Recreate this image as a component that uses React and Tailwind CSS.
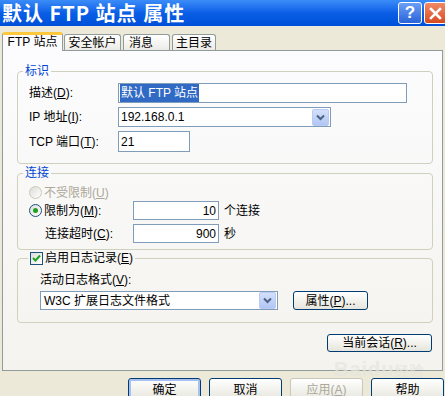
import React from "react";

const FONT = { fontFamily: '"Liberation Sans","Noto Sans CJK SC",sans-serif' };

function Chevron() {
  return (
    <div className="ml-auto mr-[1px] flex h-[17px] w-[17px] items-center justify-center rounded-[2px] border border-[#b9cbf2] bg-gradient-to-b from-[#d3e0fb] to-[#b2c6f4]">
      <svg width="9" height="7" viewBox="0 0 9 7">
        <path d="M1 1.5 L4.5 5 L8 1.5" fill="none" stroke="#4d6185" strokeWidth="2" />
      </svg>
    </div>
  );
}

function Radio({ checked, disabled }) {
  return (
    <div
      className={
        "flex h-[13px] w-[13px] items-center justify-center rounded-full border bg-gradient-to-br from-[#dcdcd7] to-white " +
        (disabled ? "border-[#cac8bb]" : "border-[#1c5180]")
      }
    >
      {checked && <div className="h-[5px] w-[5px] rounded-full bg-[#21a121]" />}
    </div>
  );
}

function Btn({ children, w, isDefault, disabled, h = "h-[19px]" }) {
  return (
    <div
      className={
        "flex items-center justify-center rounded-[3px] border bg-gradient-to-b from-white to-[#e6e5dc] text-[12px] " +
        h +
        " " +
        w +
        " " +
        (disabled ? "border-[#c9c7ba] text-[#aca899]" : "border-[#003c74] text-black") +
        (isDefault ? " shadow-[inset_0_0_0_2px_#a8c1f0]" : "")
      }
    >
      {children}
    </div>
  );
}

function U({ children }) {
  return <span className="underline underline-offset-[1px]">{children}</span>;
}

export default function App() {
  return (
    <div className="relative flex h-[396px] w-[445px] flex-col overflow-hidden bg-[#ece9d8] text-[12px] text-black" style={FONT}>
      {/* Title bar */}
      <div className="flex h-[26px] shrink-0 items-center bg-gradient-to-b from-[#3b8cf8] via-[#0a5ee6] to-[#0050d8] pl-[2px]">
        <div className="text-[20px] font-bold leading-[24px] tracking-[1px] text-white" style={{ fontFamily: '"Noto Sans CJK SC",sans-serif' }}>
          默认 FTP 站点 属性
        </div>
        <div className="ml-auto flex items-center gap-[2px]">
          <div className="flex h-[22px] w-[24px] items-center justify-center rounded-[3px] border border-white bg-gradient-to-b from-[#6b9ef5] to-[#2a63d9] text-[17px] font-bold text-white">
            ?
          </div>
          <div className="-mr-[2px] flex h-[22px] w-[23px] items-center justify-center rounded-[3px] border border-white bg-gradient-to-b from-[#f08a64] to-[#d8481d]">
            <svg width="13" height="13" viewBox="0 0 13 13">
              <path d="M2 2 L11 11 M11 2 L2 11" stroke="white" strokeWidth="2.6" strokeLinecap="square" />
            </svg>
          </div>
        </div>
      </div>

      {/* Tabs + panel */}
      <div className="pl-[2px] pt-[6px]">
        <div className="flex h-[18px] items-end">
          <div className="relative z-10 -mb-px flex h-[19px] w-[61px] items-center justify-center rounded-t-[3px] border-x border-t-[3px] border-x-[#919b9c] border-t-[#ffc83c] bg-[#fcfcfe] pb-[2px]">
            FTP 站点
          </div>
          <div className="ml-[1px] flex h-[16px] w-[57px] items-center justify-center rounded-t-[3px] border-x border-t border-[#919b9c] bg-gradient-to-b from-white to-[#ecebe6]">
            安全帐户
          </div>
          <div className="ml-[2px] flex h-[16px] w-[47px] items-center rounded-t-[3px] border-x border-t border-[#919b9c] bg-gradient-to-b from-white to-[#ecebe6] pl-[5px]">
            消息
          </div>
          <div className="ml-[2px] flex h-[16px] w-[44px] items-center justify-center rounded-t-[3px] border-x border-t border-[#919b9c] bg-gradient-to-b from-white to-[#ecebe6]">
            主目录
          </div>
        </div>

        <div className="flex h-[321px] w-[441px] flex-col border border-[#919b9c] bg-gradient-to-b from-[#fcfcfe] to-[#f4f3ee]">
          {/* Group 1 */}
          <fieldset className="ml-[14px] mt-[11px] w-[416px] rounded-[4px] border border-[#d0d0bf] pb-[11px]">
            <legend className="ml-[5px] px-[2px] text-[12px] leading-[18px] text-[#0046d5]">标识</legend>
            <div className="flex flex-col gap-[4px] pl-[11px] pt-[3px]">
              <div className="flex h-[20px] items-center">
                <div className="w-[89px]">
                  描述(<U>D</U>):
                </div>
                <div className="flex h-[20px] w-[289px] items-center border border-[#7f9db9] bg-white pl-[1px]">
                  <span className="bg-[#316ac5] px-[1px] text-white">默认 FTP 站点</span>
                </div>
              </div>
              <div className="flex h-[20px] items-center">
                <div className="w-[89px]">
                  IP 地址(<U>I</U>):
                </div>
                <div className="flex h-[20px] w-[213px] items-center border border-[#7f9db9] bg-white pl-[2px]">
                  192.168.0.1
                  <Chevron />
                </div>
              </div>
              <div className="flex h-[21px] items-center">
                <div className="w-[89px]">
                  TCP 端口(<U>T</U>):
                </div>
                <div className="flex h-[21px] w-[72px] items-center border border-[#7f9db9] bg-white pl-[2px]">21</div>
              </div>
            </div>
          </fieldset>

          {/* Group 2 */}
          <fieldset className="ml-[14px] w-[416px] rounded-[4px] border border-[#d0d0bf] pb-[6px]">
            <legend className="ml-[5px] px-[2px] text-[12px] leading-[18px] text-[#0046d5]">连接</legend>
            <div className="flex flex-col pl-[11px] pt-[2px]">
              <div className="flex h-[17px] items-center gap-[2px] text-[#aca899]">
                <Radio disabled />
                <span>
                  不受限制(<U>U</U>)
                </span>
              </div>
              <div className="flex h-[19px] items-center">
                <div className="flex w-[104px] items-center gap-[2px]">
                  <Radio checked />
                  <span>
                    限制为(<U>M</U>):
                  </span>
                </div>
                <div className="flex h-[19px] w-[86px] items-center justify-end border border-[#7f9db9] bg-white pr-[2px]">10</div>
                <span className="ml-[5px]">个连接</span>
              </div>
              <div className="mt-[4px] flex h-[19px] items-center">
                <div className="w-[104px] pl-[16px]">
                  连接超时(<U>C</U>):
                </div>
                <div className="flex h-[19px] w-[86px] items-center justify-end border border-[#7f9db9] bg-white pr-[2px]">900</div>
                <span className="ml-[5px]">秒</span>
              </div>
            </div>
          </fieldset>

          {/* Group 3 */}
          <fieldset className="-mt-[1px] ml-[14px] w-[416px] rounded-[4px] border border-[#d0d0bf] pb-[12px]">
            <legend className="ml-[10px] px-[2px] leading-[18px]">
              <div className="flex items-center gap-[2px]">
                <div className="flex h-[13px] w-[13px] items-center justify-center border border-[#1c5180] bg-gradient-to-br from-[#dcdcd7] to-white">
                  <svg width="9" height="9" viewBox="0 0 9 9">
                    <path d="M1 4 L3.5 6.5 L8 1.5" fill="none" stroke="#21a121" strokeWidth="2" />
                  </svg>
                </div>
                <span className="text-[12px]">
                  启用日志记录(<U>E</U>)
                </span>
              </div>
            </legend>
            <div className="flex flex-col pl-[22px] pt-[4px]">
              <div className="flex h-[17px] items-center">
                活动日志格式(<U>V</U>):
              </div>
              <div className="mt-[3px] flex items-center">
                <div className="flex h-[19px] w-[238px] items-center border border-[#7f9db9] bg-white pl-[3px]">
                  W3C 扩展日志文件格式
                  <Chevron />
                </div>
                <div className="ml-[15px]">
                  <Btn w="w-[75px]">
                    属性(<U>P</U>)...
                  </Btn>
                </div>
              </div>
            </div>
          </fieldset>

          <div className="mr-[10px] mt-[11px] self-end">
            <Btn w="w-[105px]" h="h-[18px]">
              当前会话(<U>R</U>)...
            </Btn>
          </div>
        </div>
      </div>

      {/* Bottom buttons */}
      <div className="mt-[7px] flex justify-end gap-[8px] pr-[1px]">
        <Btn w="w-[73px]" h="h-[23px]" isDefault>
          确定
        </Btn>
        <Btn w="w-[73px]" h="h-[23px]">
          取消
        </Btn>
        <Btn w="w-[73px]" h="h-[23px]" disabled>
          应用(<U>A</U>)
        </Btn>
        <Btn w="w-[73px]" h="h-[23px]">
          帮助
        </Btn>
      </div>

      {/* watermark */}
      <div className="pointer-events-none absolute left-[334px] top-[354px] text-[20px] font-bold tracking-[1px] text-[#e6e5de] opacity-70">
        Baidu<span className="text-[14px]">经验</span>
      </div>
    </div>
  );
}
